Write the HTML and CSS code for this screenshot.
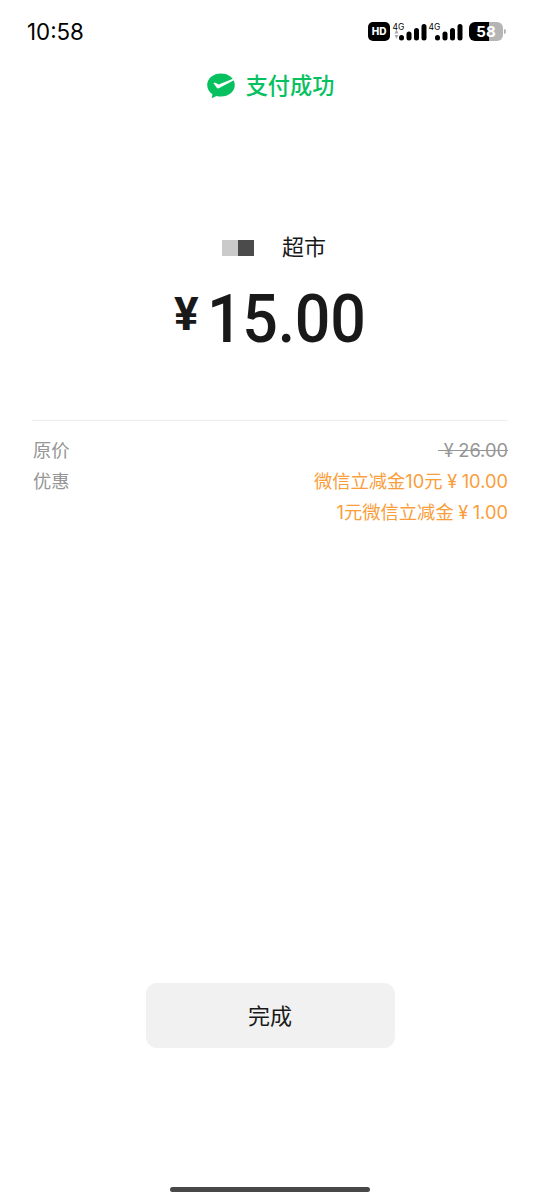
FILE: index.html
```
<!DOCTYPE html>
<html lang="zh-CN">
<head>
  <meta charset="UTF-8" />
  <meta name="viewport" content="width=device-width, initial-scale=1" />
  <title>支付成功</title>
  <link rel="stylesheet" href="styles.css">
</head>
<body>
  <header class="status-bar">
    <span class="time">10:58</span>
    <div class="status-icons">
      <span class="hd">HD</span>
      <svg class="signal" width="35" height="20" viewBox="0 0 35 20">
        <text x="-.5" y="8.5" class="net">4G</text>
        <path d="M1.500 12.500l2-4 2 4zM1.500 14l2 4 2-4z" fill="#aaa"/>
        <path d="M8.500 17v-.5M16 17v-4M23.500 17V9.500M31 17V5.500" class="bars"/>
      </svg>
      <svg class="signal" width="35" height="20" viewBox="0 0 35 20">
        <text x="-.5" y="8.5" class="net">4G</text>
        <path d="M8.500 17v-.5M16 17v-4M23.500 17V9.500M31 17V5.500" class="bars"/>
      </svg>
      <span class="battery">58</span>
      <span class="battery-cap"></span>
    </div>
  </header>

  <div class="result">
    <svg width="28" height="26" viewBox="0 0 28 26">
      <path d="M14 .5C6.300 .5.200 5.400.200 12c0 3.900 2 7.200 5.200 9.300L4.800 25.200l4.700-2.300c1.400.4 2.900.6 4.500.6 7.700 0 13.800-4.900 13.800-11.500S21.700.5 14 .5z" fill="#07c160"/>
      <path d="M6.500 10.200l1.300-.7 3.900 2L26 5.800l.9 1.400L12.200 15q-1.700 1-2.600-.6z" fill="#fff"/>
    </svg>
    <span class="result-text">支付成功</span>
  </div>

  <main>
    <div class="shop">
      <span class="block light"></span>
      <span class="block dark"></span>
      <span class="shop-name">超市</span>
    </div>
    <div class="amount"><span class="yen">¥</span><span class="number">15.00</span></div>

    <div class="detail">
      <div class="row">
        <span>原价</span>
        <span class="old"><i class="cny">¥</i>26.00</span>
      </div>
      <div class="row">
        <span>优惠</span>
        <span class="discount">微信立减金10元<i class="cny">¥</i>10.00</span>
      </div>
      <div class="row">
        <span></span>
        <span class="discount">1元微信立减金<i class="cny">¥</i>1.00</span>
      </div>
    </div>
  </main>

  <button class="done" type="button">完成</button>
  <div class="home-bar"></div>
</body>
</html>
```

FILE: styles.css
```
* {
  box-sizing: border-box;
}
body {
  margin: 0;
  height: 1200px;
  overflow: hidden;
  background: #fff;
  color: #191919;
  font-family: Inter, 'Noto Sans CJK SC', sans-serif;
  display: flex;
  flex-direction: column;
  align-items: center;
}
.status-bar {
  width: 100%;
  height: 62px;
  padding: 0 34px 0 27px;
  display: flex;
  justify-content: space-between;
  align-items: center;
  color: #000;
}
.time {
  padding-top: 1px;
  font-size: 22.3px;
}
.status-icons {
  display: flex;
  align-items: center;
}
.hd {
  width: 22px;
  height: 19px;
  margin-right: 3px;
  border-radius: 5px;
  background: #000;
  color: #fff;
  font-size: 10px;
  font-weight: 800;
  line-height: 19px;
  text-align: center;
}
.signal {
  margin-right: 1px;
  overflow: visible;
}
.net {
  font-size: 8.5px;
}
.bars {
  stroke: #000;
  stroke-width: 5;
  stroke-linecap: round;
}
.battery {
  width: 34px;
  height: 19px;
  margin-left: 4px;
  border-radius: 6px;
  background: linear-gradient(to right, #000 58%, #b5b5b5 58%);
  color: #fff;
  font-size: 15px;
  font-weight: 700;
  line-height: 19px;
  text-align: center;
}
.battery-cap {
  width: 2px;
  height: 5px;
  margin-left: 1px;
  border-radius: 0 2px 2px 0;
  background: #b5b5b5;
}
.result {
  height: 48px;
  padding-left: 1px;
  display: flex;
  align-items: center;
  gap: 11px;
  color: #07c160;
  font-size: 22.2px;
  font-weight: 500;
}
.result-text {
  padding-bottom: 4px;
}
main {
  width: 100%;
  padding: 0 32px;
}
.shop {
  height: 34px;
  margin-top: 120px;
  padding-left: 190px;
  display: flex;
  align-items: center;
}
.block {
  width: 16px;
  height: 16px;
  margin-top: 2px;
}
.light {
  background: #cacaca;
}
.dark {
  background: #4b4b4b;
}
.shop-name {
  margin-left: 28px;
  padding-bottom: 4px;
  font-size: 22px;
}
.amount {
  height: 76px;
  margin-top: 18px;
  padding-left: 142px;
  display: flex;
  font-family: Roboto, sans-serif;
  font-size: 66px;
  font-weight: 500;
  line-height: 76px;
}
.yen {
  width: 33px;
  font-size: 46px;
  font-weight: 700;
  line-height: 64px;
}
.number {
  transform: scaleX(0.95);
  transform-origin: left;
  letter-spacing: -0.3px;
}
.detail {
  margin-top: 62px;
  padding-top: 12px;
  border-top: 1px solid #ededed;
  color: #969696;
  font-size: 18.3px;
}
.row {
  height: 31px;
  padding-left: 1px;
  display: flex;
  justify-content: space-between;
  align-items: center;
}
.cny {
  display: inline-block;
  width: 19px;
  font-size: 18px;
  font-style: normal;
  text-align: center;
}
.old {
  position: relative;
  padding-top: 2px;
}
.old::after {
  content: '';
  position: absolute;
  left: -1px;
  right: 0;
  top: 55%;
  height: 1px;
  background: #969696;
}
.discount {
  color: #fa9d3b;
}
.done {
  width: 249px;
  height: 65px;
  margin-top: 457px;
  padding-bottom: 4px;
  border: none;
  border-radius: 11px;
  background: #f1f1f1;
  color: #191919;
  font-family: inherit;
  font-size: 22px;
}
.home-bar {
  width: 200px;
  height: 5px;
  margin-top: auto;
  margin-bottom: 8px;
  border-radius: 3px;
  background: #484848;
}
```
